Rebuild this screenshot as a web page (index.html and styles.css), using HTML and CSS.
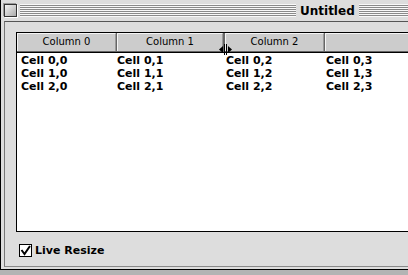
FILE: index.html
```html
<!DOCTYPE html>
<html lang="en">
<head>
    <meta charset="UTF-8">
    <title>Untitled</title>
    <link rel="stylesheet" href="styles.css">
</head>
<body>
    <div class="window">
        <div class="titlebar">
            <div class="close-box"></div>
            <div class="stripes left"></div>
            <div class="title">Untitled</div>
            <div class="stripes"></div>
        </div>
        <div class="frame">
            <div class="list-box">
                <div class="header">
                    <div class="col col0">Column 0</div>
                    <div class="col col1">Column 1</div>
                    <div class="col col2">Column 2</div>
                    <div class="col col3"></div>
                </div>
                <div class="rows">
                    <div class="row"><span class="c0">Cell 0,0</span><span class="c1">Cell 0,1</span><span class="c2">Cell 0,2</span><span class="c3">Cell 0,3</span></div>
                    <div class="row"><span class="c0">Cell 1,0</span><span class="c1">Cell 1,1</span><span class="c2">Cell 1,2</span><span class="c3">Cell 1,3</span></div>
                    <div class="row"><span class="c0">Cell 2,0</span><span class="c1">Cell 2,1</span><span class="c2">Cell 2,2</span><span class="c3">Cell 2,3</span></div>
                </div>
                <!-- resize cursor over the column divider -->
                <svg class="cursor" width="14" height="11" viewBox="0 0 14 11">
                    <rect x="5" y="0" width="1" height="11" fill="#000"/>
                    <rect x="7" y="0" width="1" height="11" fill="#000"/>
                    <path d="M0 5.5 L4 2 L4 9 Z" fill="#000"/>
                    <path d="M13 5.5 L9 2 L9 9 Z" fill="#000"/>
                </svg>
            </div>
            <label class="live">
                <span class="checkbox">
                    <svg width="11" height="11" viewBox="0 0 11 11">
                        <path d="M1.5 5 L4.5 9 L10 1" stroke="#000" stroke-width="2" fill="none"/>
                    </svg>
                </span>
                Live Resize
            </label>
        </div>
    </div>
</body>
</html>
```

FILE: styles.css
```css
body {
    margin: 0;
    background-color: #b4b4b4;
    overflow: hidden;
    font-family: "DejaVu Sans", Arial, sans-serif;
}
.window {
    width: 430px;
    height: 270px;
    background-color: #dddddd;
    border-left: 1px solid #000;
    border-bottom: 1px solid #000;
    box-sizing: border-box;
    display: flex;
    flex-direction: column;
}

/* title bar */
.titlebar {
    height: 21px;
    display: flex;
    align-items: center;
    padding-left: 3px;
    box-sizing: border-box;
}
.close-box {
    width: 11px;
    height: 11px;
    border: 1px solid #333;
    background: linear-gradient(135deg, #f4f4f4, #aaaaaa);
    box-shadow: 1px 1px 0 #fff, -1px -1px 0 #999;
    margin-right: 3px;
}
.stripes {
    flex: 1;
    height: 13px;
    background: repeating-linear-gradient(to bottom, #f8f8f8 0, #f8f8f8 1px, #8a8a8a 1px, #8a8a8a 2px);
}
.stripes.left {
    flex: none;
    width: 276px;
}
.title {
    font-weight: bold;
    font-size: 12px;
    padding: 0 4px;
    color: #000;
}

/* inset content frame */
.frame {
    flex: 1;
    margin-left: 3px;
    border-top: 1px solid #555;
    border-left: 1px solid #777;
    border-bottom: 1px solid #888;
    margin-bottom: 2px;
    padding: 10px 0 0 11px;
    display: flex;
    flex-direction: column;
}

.list-box {
    position: relative;
    height: 200px;
    border: 1px solid #000;
    border-right: none;
    background-color: #fff;
    box-sizing: border-box;
}
.header {
    display: flex;
    height: 19px;
    border-bottom: 1px solid #000;
    background-color: #666;
}
.col {
    height: 18px;
    background-color: #cccccc;
    border-top: 1px solid #f4f4f4;
    border-left: 1px solid #f4f4f4;
    border-right: 1px solid #999;
    box-sizing: border-box;
    font-size: 10px;
    line-height: 16px;
    text-align: center;
    margin-right: 1px;
}
.col0 { width: 99px; }
.col1 { width: 106px; margin-right: 2px; }
.col2 { width: 99px; }
.col3 { flex: 1; border-right: none; }

.row {
    display: flex;
    height: 13px;
    font-size: 11px;
    font-weight: bold;
    line-height: 13px;
    margin-top: 0;
}
.row:first-child {
    margin-top: 1px;
}
.c0 { width: 96px; padding-left: 4px; }
.c1 { width: 109px; }
.c2 { width: 100px; }

.cursor {
    position: absolute;
    left: 202px;
    top: 11px;
}

/* checkbox row */
.live {
    display: flex;
    align-items: center;
    margin-top: 12px;
    margin-left: 3px;
    font-size: 11px;
    font-weight: bold;
}
.checkbox {
    width: 11px;
    height: 11px;
    border: 1px solid #000;
    background-color: #fff;
    margin-right: 3px;
    display: flex;
}
```
